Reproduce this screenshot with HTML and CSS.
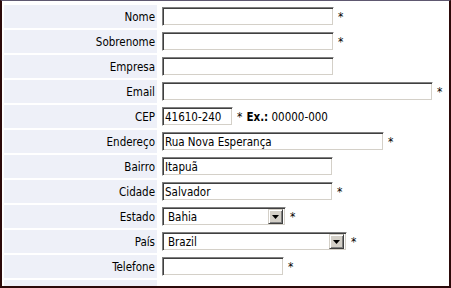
FILE: index.html
```html
<!DOCTYPE html>
<html lang="pt-BR">
<head>
<meta charset="utf-8">
<title>Cadastro</title>
<link rel="stylesheet" href="styles.css">
</head>
<body>
<div class="form">
  <div class="label">Nome</div>
  <div class="field"><span class="input w172"></span><span class="req">*</span></div>

  <div class="label">Sobrenome</div>
  <div class="field"><span class="input w172"></span><span class="req">*</span></div>

  <div class="label">Empresa</div>
  <div class="field"><span class="input w172"></span></div>

  <div class="label">Email</div>
  <div class="field"><span class="input w271"></span><span class="req">*</span></div>

  <div class="label">CEP</div>
  <div class="field"><span class="input w71">41610-240</span><span class="req">*</span><span class="hint"><b>Ex.:</b> 00000-000</span></div>

  <div class="label">Endereço</div>
  <div class="field"><span class="input w222">Rua Nova Esperança</span><span class="req">*</span></div>

  <div class="label">Bairro</div>
  <div class="field"><span class="input w171">Itapuã</span></div>

  <div class="label">Cidade</div>
  <div class="field"><span class="input w171">Salvador</span><span class="req">*</span></div>

  <div class="label">Estado</div>
  <div class="field"><span class="select w124"><span class="sel-text">Bahia</span><span class="sel-btn"><svg width="7" height="4" viewBox="0 0 7 4"><path d="M0 0h7L3.5 4z" fill="#000"/></svg></span></span><span class="req">*</span></div>

  <div class="label">País</div>
  <div class="field"><span class="select w185"><span class="sel-text">Brazil</span><span class="sel-btn"><svg width="7" height="4" viewBox="0 0 7 4"><path d="M0 0h7L3.5 4z" fill="#000"/></svg></span></span><span class="req">*</span></div>

  <div class="label">Telefone</div>
  <div class="field"><span class="input w122"></span><span class="req">*</span></div>

  <div class="label"></div>
  <div class="field"></div>
</div>
</body>
</html>
```

FILE: styles.css
```css
html, body {
  margin: 0;
  padding: 0;
  background: #ffffff;
}

body {
  width: 451px;
  height: 288px;
  overflow: hidden;
  font-family: "DejaVu Sans Condensed", "Liberation Sans", sans-serif;
  font-size: 11.5px;
  color: #000;
}

.form {
  box-sizing: border-box;
  width: 451px;
  height: 288px;
  overflow: hidden;
  border-top: 1px solid #5e5870;
  border-left: 2px solid #2c0a0a;
  border-right: 2px solid #2c0a0a;
  border-bottom: 2px solid #2c0a0a;
  padding: 4px 0 0 2px;
  display: grid;
  grid-template-columns: 153px 1fr;
  grid-auto-rows: 23px;
  column-gap: 2px;
  row-gap: 2px;
}

.label {
  background: #eef0f8;
  display: flex;
  align-items: center;
  justify-content: flex-end;
  padding-right: 2px;
}

.field {
  display: flex;
  align-items: center;
  padding-left: 3px;
}

.input,
.select {
  box-sizing: border-box;
  height: 19px;
  background: #fff;
  border: 1px solid;
  border-color: #808080 #ffffff #ffffff #808080;
  box-shadow: inset 1px 1px 0 #404040, inset -1px -1px 0 #d4d0c8;
  display: flex;
  align-items: center;
  padding-left: 2px;
  white-space: nowrap;
  overflow: hidden;
}

.select {
  padding: 2px;
}

.sel-text {
  flex: 1;
  padding-left: 3px;
}

.sel-btn {
  box-sizing: border-box;
  width: 15px;
  height: 15px;
  background: #d4d0c8;
  border: 1px solid;
  border-color: #d4d0c8 #404040 #404040 #d4d0c8;
  box-shadow: inset 1px 1px 0 #fff, inset -1px -1px 0 #808080;
  display: flex;
  align-items: center;
  justify-content: center;
}

.sel-btn svg {
  display: block;
}

.req {
  margin-left: 4px;
  font-size: 12px;
}

.hint {
  margin-left: 4px;
}

.w71 { width: 71px; }
.w122 { width: 122px; }
.w124 { width: 124px; }
.w171 { width: 171px; }
.w172 { width: 172px; }
.w185 { width: 185px; }
.w222 { width: 222px; }
.w271 { width: 271px; }
```
